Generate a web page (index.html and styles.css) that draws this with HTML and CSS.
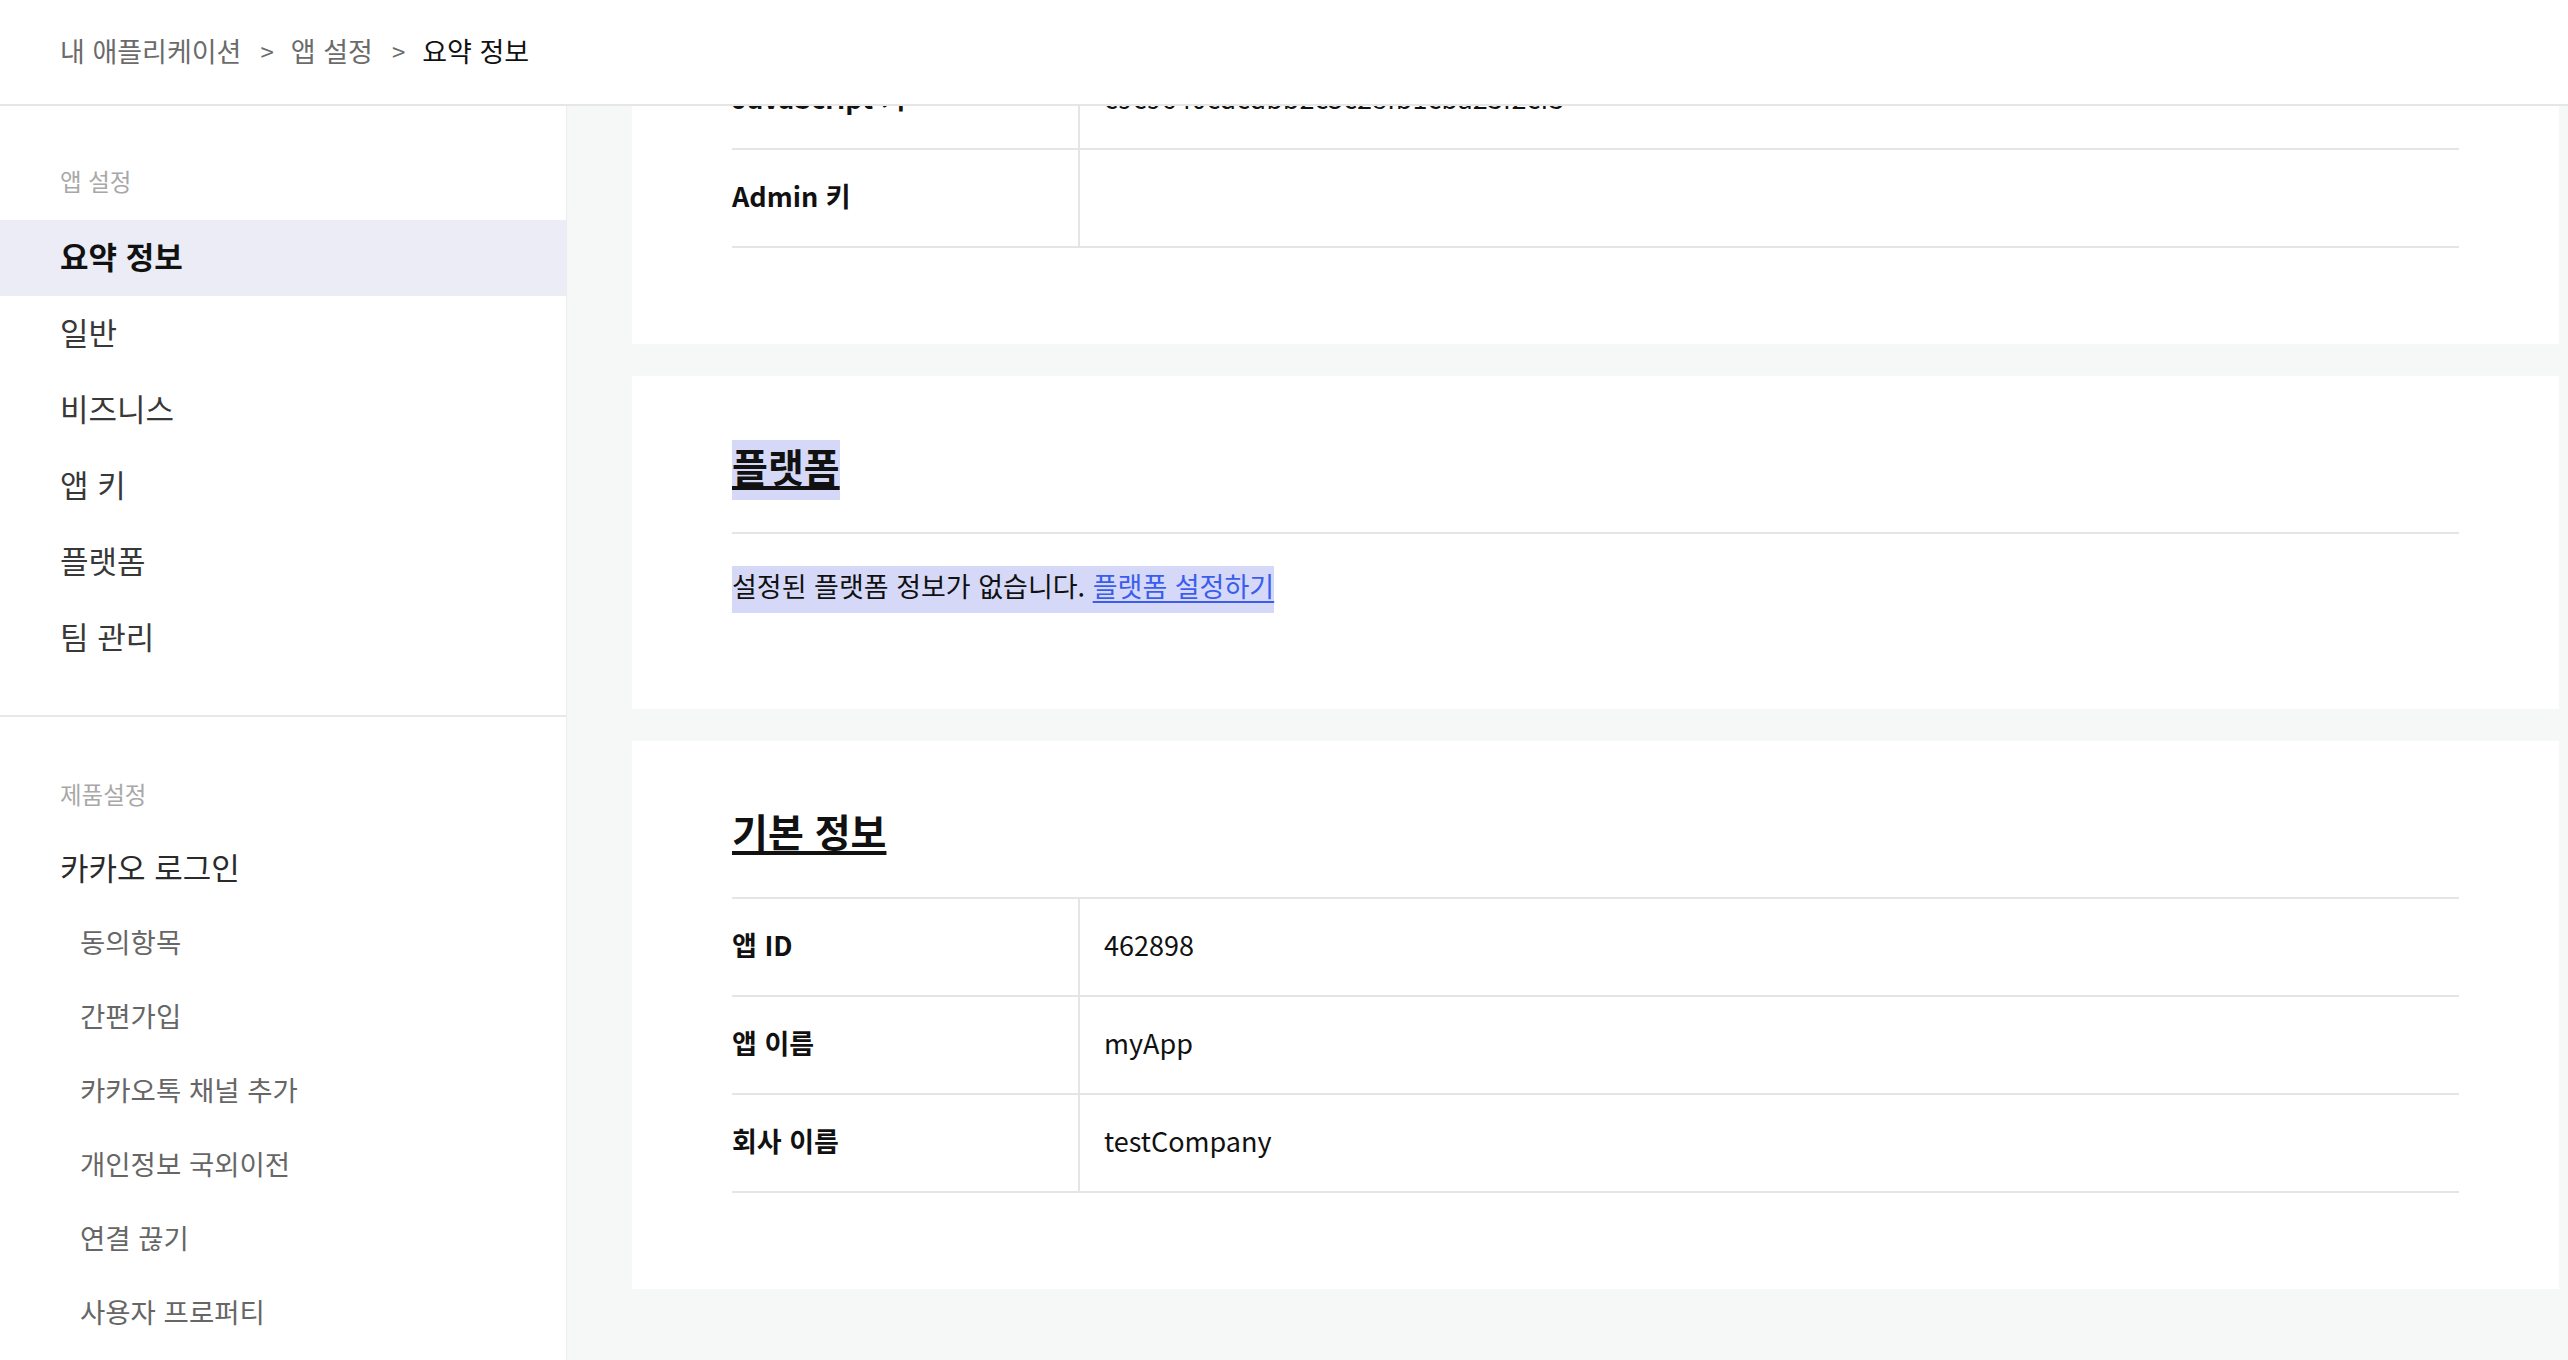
FILE: index.html
```html
<!DOCTYPE html>
<html lang="ko">
<head>
<meta charset="utf-8">
<title>요약 정보</title>
<link rel="stylesheet" href="styles.css">
</head>
<body>
<div class="app">
  <header class="topbar">
    <nav class="crumbs">
      <span class="crumb">내 애플리케이션</span>
      <span class="sep">&gt;</span>
      <span class="crumb">앱 설정</span>
      <span class="sep">&gt;</span>
      <span class="crumb current">요약 정보</span>
    </nav>
  </header>
  <div class="body">
    <aside class="sidebar">
      <section class="side-group">
        <div class="side-label">앱 설정</div>
        <ul class="side-list">
          <li class="side-item active">요약 정보</li>
          <li class="side-item">일반</li>
          <li class="side-item">비즈니스</li>
          <li class="side-item">앱 키</li>
          <li class="side-item">플랫폼</li>
          <li class="side-item">팀 관리</li>
        </ul>
      </section>
      <section class="side-group product">
        <div class="side-label">제품설정</div>
        <ul class="side-list">
          <li class="side-item head">카카오 로그인</li>
          <li class="side-sub">동의항목</li>
          <li class="side-sub">간편가입</li>
          <li class="side-sub">카카오톡 채널 추가</li>
          <li class="side-sub">개인정보 국외이전</li>
          <li class="side-sub">연결 끊기</li>
          <li class="side-sub">사용자 프로퍼티</li>
        </ul>
      </section>
    </aside>
    <main class="content">
      <div class="cards">
        <section class="card card-first">
          <div class="card-head"><h2 class="card-title"><span class="title-text">앱 키</span></h2></div>
          <div class="kv">
            <div class="kv-row"><div class="kv-key">네이티브 앱 키</div><div class="kv-val">4a1b9e0c2d7f83b65e0a91c4d2f7b308</div></div>
            <div class="kv-row"><div class="kv-key">REST API 키</div><div class="kv-val">7e2c5a90b14d6f38c0a2e9b17d54f6a1</div></div>
            <div class="kv-row"><div class="kv-key">JavaScript 키</div><div class="kv-val">c9c9640cdcdbb2c5c28fb1cba23f2cf3</div></div>
            <div class="kv-row"><div class="kv-key">Admin 키</div><div class="kv-val"></div></div>
          </div>
        </section>
        <section class="card">
          <div class="card-head"><h2 class="card-title"><span class="title-text selected">플랫폼</span></h2></div>
          <p class="card-text"><span class="selected">설정된 플랫폼 정보가 없습니다. <a class="link" href="#">플랫폼 설정하기</a></span></p>
        </section>
        <section class="card">
          <div class="card-head"><h2 class="card-title"><span class="title-text">기본 정보</span></h2></div>
          <div class="kv">
            <div class="kv-row"><div class="kv-key">앱 ID</div><div class="kv-val">462898</div></div>
            <div class="kv-row"><div class="kv-key">앱 이름</div><div class="kv-val">myApp</div></div>
            <div class="kv-row"><div class="kv-key">회사 이름</div><div class="kv-val">testCompany</div></div>
          </div>
        </section>
      </div>
    </main>
  </div>
</div>
</body>
</html>
```

FILE: styles.css
```css
* { box-sizing: border-box; }
html, body {
  margin: 0;
  padding: 0;
  width: 2568px;
  height: 1360px;
  overflow: hidden;
  background: #fff;
  font-family: "Noto Sans CJK KR", "Noto Sans", sans-serif;
  color: #111;
}
.app {
  height: 1360px;
  display: flex;
  flex-direction: column;
  overflow: hidden;
}
.topbar {
  flex: none;
  height: 106px;
  border-bottom: 2px solid #e6e6e6;
  display: flex;
  align-items: center;
  padding-left: 60px;
  padding-bottom: 4px;
  background: #fff;
}
.crumbs {
  display: flex;
  align-items: center;
  font-size: 27px;
  color: #6b6b6b;
}
.sep {
  margin: 0 17px 0 19px;
  font-size: 24px;
  color: #6b6b6b;
}
.crumb.current { color: #111; }

.body {
  flex: 1;
  display: flex;
  min-height: 0;
}
.sidebar {
  flex: none;
  width: 567px;
  background: #fff;
  border-right: 1px solid #ececec;
}
.side-group {
  padding: 60px 0 39px;
  border-bottom: 2px solid #e8e8e8;
}
.side-group.product {
  padding-top: 62px;
  border-bottom: none;
}
.side-label {
  padding-left: 60px;
  font-size: 23.5px;
  line-height: 30px;
  height: 32px;
  color: #a8a8a8;
  margin-bottom: 22px;
}
.product .side-label { margin-bottom: 21px; }
.side-list {
  list-style: none;
  margin: 0;
  padding: 0;
}
.side-item {
  height: 76px;
  line-height: 72px;
  padding-left: 60px;
  font-size: 31px;
  color: #383838;
}
.side-item.active {
  background: #ebecf5;
  font-weight: 700;
  color: #111;
}
.side-item.head {
  height: 74px;
  line-height: 70px;
  color: #2a2a2a;
}
.side-sub {
  height: 74px;
  line-height: 70px;
  padding-left: 80px;
  font-size: 27.5px;
  color: #666;
}

.content {
  flex: 1;
  min-width: 0;
  background: #f6f7f7;
  padding: 0 9px 0 65px;
  overflow: hidden;
}
.cards {
  display: flex;
  flex-direction: column;
  gap: 32px;
}
.card {
  background: #fff;
  padding: 64px 100px 96px;
}
.card-first { margin-top: -408px; }
.card-head {
  padding-bottom: 32px;
  border-bottom: 2px solid #e5e5e5;
}
.card-title {
  margin: 0;
  font-size: 39px;
  font-weight: 700;
  line-height: 60px;
  height: 60px;
}
.title-text {
  display: inline-block;
  vertical-align: top;
  height: 60px;
  line-height: 50px;
  padding-bottom: 10px;
  text-decoration: underline;
  text-decoration-thickness: 4px;
  text-underline-offset: 4px;
  text-decoration-skip-ink: none;
  color: #111;
}
.selected { background: #d5d9f7; }
.card-text {
  margin: 32px 0 0;
  font-size: 27px;
  line-height: 47px;
  height: 47px;
  color: #111;
}
.card-text .selected {
  display: inline-block;
  vertical-align: top;
  height: 47px;
  line-height: 40px;
  padding-bottom: 7px;
}
.link {
  color: #3a5df0;
  text-decoration: underline;
  text-decoration-thickness: 2px;
  text-underline-offset: 4px;
}
.kv-row {
  display: grid;
  grid-template-columns: 348px 1fr;
  border-bottom: 2px solid #e5e5e5;
}
.kv-key {
  height: 96px;
  display: flex;
  align-items: center;
  padding-bottom: 6px;
  border-right: 2px solid #e5e5e5;
  font-size: 27px;
  font-weight: 700;
  color: #111;
}
.kv-val {
  display: flex;
  align-items: center;
  padding-left: 24px;
  padding-bottom: 6px;
  font-size: 27px;
  color: #111;
}
```
